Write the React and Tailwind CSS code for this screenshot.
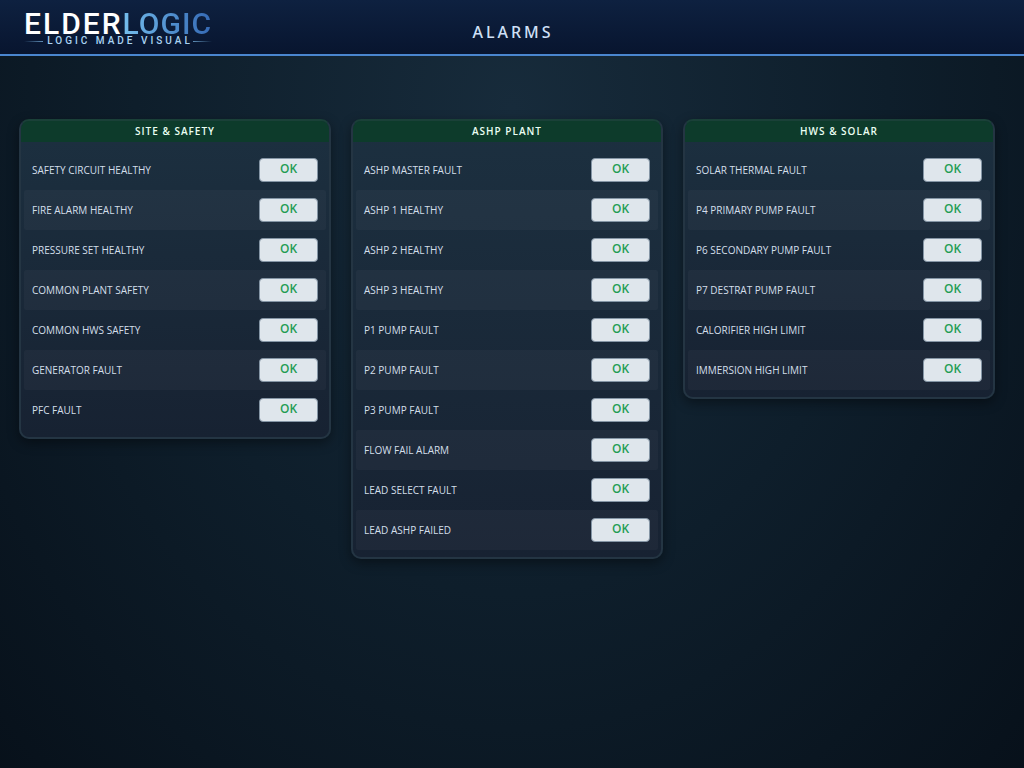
// ==========================================
// App.jsx
// ALARMS OVERVIEW
// ==========================================

import React from 'react';

const panels = [
  {
    title: 'SITE & SAFETY',
    alarms: [
      'SAFETY CIRCUIT HEALTHY',
      'FIRE ALARM HEALTHY',
      'PRESSURE SET HEALTHY',
      'COMMON PLANT SAFETY',
      'COMMON HWS SAFETY',
      'GENERATOR FAULT',
      'PFC FAULT',
    ],
  },
  {
    title: 'ASHP PLANT',
    alarms: [
      'ASHP MASTER FAULT',
      'ASHP 1 HEALTHY',
      'ASHP 2 HEALTHY',
      'ASHP 3 HEALTHY',
      'P1 PUMP FAULT',
      'P2 PUMP FAULT',
      'P3 PUMP FAULT',
      'FLOW FAIL ALARM',
      'LEAD SELECT FAULT',
      'LEAD ASHP FAILED',
    ],
  },
  {
    title: 'HWS & SOLAR',
    alarms: [
      'SOLAR THERMAL FAULT',
      'P4 PRIMARY PUMP FAULT',
      'P6 SECONDARY PUMP FAULT',
      'P7 DESTRAT PUMP FAULT',
      'CALORIFIER HIGH LIMIT',
      'IMMERSION HIGH LIMIT',
    ],
  },
];

const Logo = () => (
  <div className="pt-3 self-start flex flex-col w-fit font-['Roboto',sans-serif]">
    <div className="text-[30px] leading-6 font-medium tracking-[2px] text-white">
      ELDER
      <span className="bg-linear-to-r from-[#74bdec] to-[#3569b4] bg-clip-text tracking-[1px] text-transparent">LOGIC</span>
    </div>
    <div className="pt-px flex items-center">
      <span className="h-px flex-1 bg-linear-to-r from-transparent to-[#5f8fb8]" />
      <span className="pl-1 text-[10px] leading-2 font-medium tracking-[3px] text-[#a9d3f2]">LOGIC MADE VISUAL</span>
      <span className="h-px flex-1 bg-linear-to-r from-[#5f8fb8] to-transparent" />
    </div>
  </div>
);

const AlarmRow = ({ label }) => (
  <li className="h-10 px-2 flex items-center justify-between rounded-xs even:bg-white/3">
    <span className="text-[10px] font-medium text-[#d3dfea]">{label}</span>
    <span className="w-[59px] h-6 pb-0.5 flex items-center justify-center rounded-sm border border-[#8495a5] bg-[#dfe6ec] text-xs font-semibold text-[#1f9d55]">
      OK
    </span>
  </li>
);

const AlarmPanel = ({ title, alarms }) => (
  <section className="rounded-[10px] border-2 border-[#243543] border-t-[#1a4038] bg-linear-to-b from-[#1c3040] to-[#172232] shadow-[0_4px_12px_rgba(0,0,0,0.4)] overflow-hidden">
    <h2 className="h-[21px] flex items-center justify-center bg-[#0d3b2b] text-[10px] font-semibold tracking-[1px] text-[#eafff3]">
      {title}
    </h2>
    <ul className="px-[3px] pt-2 pb-[7px]">
      {alarms.map((label) => (
        <AlarmRow key={label} label={label} />
      ))}
    </ul>
  </section>
);

const App = () => (
  <div className="min-h-screen bg-[radial-gradient(ellipse_at_50%_14%,#172b3b_0%,#0e1e2b_52%,#060e17_110%)] font-['Open_Sans',sans-serif]">
    <header className="h-14 px-6 grid grid-cols-[1fr_auto_1fr] items-center border-b-2 border-[#4a86cf] bg-linear-to-b from-[#0e2140] to-[#08152f]">
      <Logo />
      <h1 className="pt-2.5 pl-0.5 text-base font-medium tracking-[3px] text-[#cfe0f7] font-['Noto_Sans',sans-serif]">ALARMS</h1>
    </header>
    <main className="pt-[63px] pb-5 pl-[19px] pr-[29px] grid grid-cols-3 items-start gap-5">
      {panels.map((panel) => (
        <AlarmPanel key={panel.title} title={panel.title} alarms={panel.alarms} />
      ))}
    </main>
  </div>
);

export default App;
